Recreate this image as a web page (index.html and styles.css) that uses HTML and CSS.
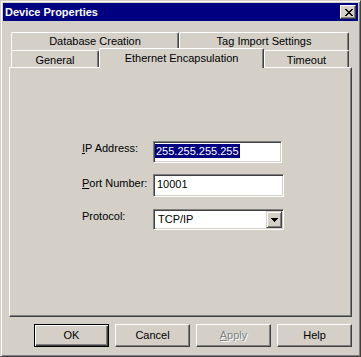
FILE: index.html
```html
<!DOCTYPE html>
<html lang="en">
<head>
  <meta charset="UTF-8" />
  <title>Device Properties</title>
  <link rel="stylesheet" href="styles.css">
</head>
<body>

<div class="window">
  <div class="titlebar">
    <span class="title">Device Properties</span>
    <span class="close-btn">
      <svg width="8" height="7" viewBox="0 0 8 7" shape-rendering="crispEdges">
        <path fill="#000" d="M0 0h2v1H0z M6 0h2v1H6z M1 1h2v1H1z M5 1h2v1H5z M2 2h4v1H2z M3 3h2v1H3z M2 4h4v1H2z M1 5h2v1H1z M5 5h2v1H5z M0 6h2v1H0z M6 6h2v1H6z"/>
      </svg>
    </span>
  </div>

  <div class="body">
    <div class="tabs">
      <div class="tab-row back">
        <div class="tab tab-db">Database Creation</div>
        <div class="tab tab-tag">Tag Import Settings</div>
      </div>
      <div class="tab-row front">
        <div class="tab tab-gen">General</div>
        <div class="tab tab-eth active">Ethernet Encapsulation</div>
        <div class="tab tab-time">Timeout</div>
      </div>
    </div>

    <div class="panel">
      <div class="form">
        <div class="row row-ip">
          <span class="label"><u>I</u>P Address:</span>
          <div class="edit edit-ip"><span class="selected">255.255.255.255</span></div>
        </div>
        <div class="row row-port">
          <span class="label"><u>P</u>ort Number:</span>
          <div class="edit edit-port">10001</div>
        </div>
        <div class="row row-proto">
          <span class="label">Protocol:</span>
          <div class="combo">
            <span class="combo-text">TCP/IP</span>
            <span class="combo-btn">
              <svg width="7" height="4" viewBox="0 0 7 4" shape-rendering="crispEdges">
                <path fill="#000" d="M0 0h7v1H0z M1 1h5v1H1z M2 2h3v1H2z M3 3h1v1H3z"/>
              </svg>
            </span>
          </div>
        </div>
      </div>
    </div>

    <div class="buttons">
      <div class="btn default">OK</div>
      <div class="btn">Cancel</div>
      <div class="btn disabled"><u>A</u>pply</div>
      <div class="btn">Help</div>
    </div>
  </div>
</div>

</body>
</html>
```

FILE: styles.css
```css
body {
  margin: 0;
  padding: 0;
  background: #d4d0c8;
  font-family: "Liberation Sans", Arial, sans-serif;
  font-size: 11px;
  color: #000;
}

.window {
  box-sizing: border-box;
  width: 361px;
  height: 357px;
  background: #d4d0c8;
  border: 1px solid;
  border-color: #d4d0c8 #404040 #404040 #d4d0c8;
  box-shadow: inset 1px 1px #fff, inset -1px -1px #808080;
  padding: 2px;
}

/* barre de titre */
.titlebar {
  height: 18px;
  background: #000080;
  display: flex;
  align-items: center;
  padding: 0 2px;
}

.title {
  color: #fff;
  font-weight: bold;
  font-size: 11px;
}

.close-btn {
  box-sizing: border-box;
  width: 16px;
  height: 14px;
  margin-left: auto;
  background: #d4d0c8;
  border: 1px solid;
  border-color: #fff #404040 #404040 #fff;
  box-shadow: inset -1px -1px #808080;
  padding: 3px 0 0 4px;
  display: flex;
  align-items: flex-start;
}

.close-btn svg {
  display: block;
}

.body {
  padding: 0 6px;
}

/* onglets */
.tabs {
  margin: 11px 2px 0;
}

.tab-row {
  display: flex;
  align-items: flex-start;
}

.tab {
  box-sizing: border-box;
  background: #d4d0c8;
  border-top: 1px solid #fff;
  border-left: 1px solid #fff;
  border-right: 1px solid #404040;
  box-shadow: inset -1px 0 #808080;
  border-radius: 2px 2px 0 0;
  text-align: center;
  white-space: nowrap;
}

.back .tab {
  height: 18px;
  line-height: 17px;
}

.front {
  height: 17px;
}

.front .tab {
  height: 17px;
  line-height: 16px;
  padding-top: 1px;
}

.front .tab.active {
  position: relative;
  z-index: 1;
  height: 20px;
  margin-top: -2px;
  line-height: 16px;
  padding-top: 1px;
}

.tab-db { width: 168px; }
.tab-tag { width: 170px; }
.tab-gen { width: 88px; }
.tab-eth { width: 165px; }
.tab-time { width: 85px; }

/* panneau */
.panel {
  box-sizing: border-box;
  height: 250px;
  border: 1px solid;
  border-color: #fff #404040 #404040 #fff;
  box-shadow: inset -1px -1px #808080;
}

.form {
  padding: 73px 0 0 72px;
}

.row {
  display: flex;
  align-items: flex-start;
}

.label {
  width: 71px;
  line-height: 13px;
  padding-top: 1px;
  white-space: nowrap;
}

.row-port {
  margin-top: 11px;
}

.row-port .label {
  padding-top: 3px;
}

.row-proto {
  margin-top: 12px;
}

.edit,
.combo {
  box-sizing: border-box;
  background: #fff;
  border: 1px solid;
  border-color: #808080 #fff #fff #808080;
  box-shadow: inset 1px 1px #404040, inset -1px -1px #d4d0c8;
  padding: 2px 2px 0;
  line-height: 13px;
}

.edit-ip {
  width: 129px;
  height: 22px;
  padding: 2px 1px 0;
}

.selected {
  display: inline-block;
  background: #000080;
  color: #fff;
  line-height: 14px;
  padding: 0 1px;
}

.edit-port {
  width: 131px;
  height: 23px;
  padding: 3px 3px 0;
}

.combo {
  width: 131px;
  height: 21px;
  padding: 1px;
  display: flex;
  align-items: center;
}

.combo-text {
  flex: 1;
  padding-left: 3px;
}

.combo-btn {
  box-sizing: border-box;
  width: 16px;
  height: 17px;
  background: #d4d0c8;
  border: 1px solid;
  border-color: #d4d0c8 #404040 #404040 #d4d0c8;
  box-shadow: inset 1px 1px #fff, inset -1px -1px #808080;
  display: flex;
  align-items: center;
  justify-content: center;
}

.combo-btn svg {
  display: block;
}

/* boutons */
.buttons {
  display: flex;
  justify-content: flex-end;
  gap: 6px;
  margin-top: 7px;
}

.btn {
  box-sizing: border-box;
  width: 75px;
  height: 23px;
  line-height: 21px;
  text-align: center;
  background: #d4d0c8;
  border: 1px solid;
  border-color: #fff #404040 #404040 #fff;
  box-shadow: inset -1px -1px #808080;
}

.btn.default {
  border-color: #000;
  box-shadow: inset 1px 1px #fff, inset -1px -1px #404040, inset -2px -2px #808080;
}

.btn.disabled {
  color: #808080;
  text-shadow: 1px 1px #fff;
}
```
